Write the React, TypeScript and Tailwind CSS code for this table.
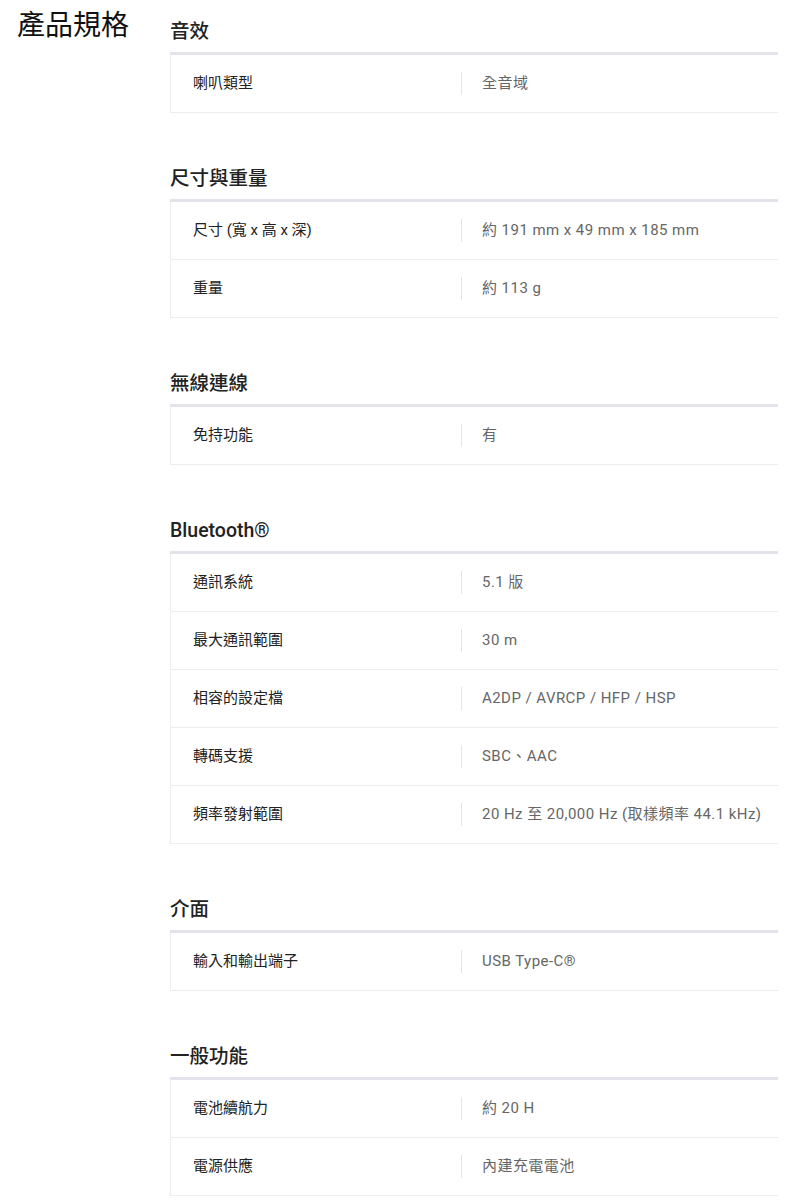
import React from "react";

type Row = [string, string];
type Section = { title: string; rows: Row[] };

const sections: Section[] = [
  { title: "音效", rows: [["喇叭類型", "全音域"]] },
  {
    title: "尺寸與重量",
    rows: [
      ["尺寸 (寬 x 高 x 深)", "約 191 mm x 49 mm x 185 mm"],
      ["重量", "約 113 g"],
    ],
  },
  { title: "無線連線", rows: [["免持功能", "有"]] },
  {
    title: "Bluetooth®",
    rows: [
      ["通訊系統", "5.1 版"],
      ["最大通訊範圍", "30 m"],
      ["相容的設定檔", "A2DP / AVRCP / HFP / HSP"],
      ["轉碼支援", "SBC、AAC"],
      ["頻率發射範圍", "20 Hz 至 20,000 Hz (取樣頻率 44.1 kHz)"],
    ],
  },
  { title: "介面", rows: [["輸入和輸出端子", "USB Type-C®"]] },
  {
    title: "一般功能",
    rows: [
      ["電池續航力", "約 20 H"],
      ["電源供應", "內建充電電池"],
    ],
  },
];

export default function App() {
  return (
    <div
      className="flex w-[800px] bg-white text-[#222]"
      style={{ fontFamily: 'Roboto, "Noto Sans CJK TC", sans-serif' }}
    >
      <div className="w-[170px] shrink-0 pl-[17px] pt-[8px]">
        <h1 className="text-[28px] leading-[36px] font-normal text-[#111]">產品規格</h1>
      </div>
      <div className="w-[608px] pt-[20px]">
        {sections.map((s) => (
          <section key={s.title} className="mb-[54px]">
            <h2 className="text-[19.5px] leading-[24px] font-medium text-[#222] mb-[8px]">
              {s.title}
            </h2>
            <div className="border-t-[3px] border-[#e2e3eb]">
              {s.rows.map(([k, v]) => (
                <div
                  key={k}
                  className="flex h-[58px] items-center border-l border-b border-[#ededed]"
                >
                  <div className="w-[290px] shrink-0 pl-[22px] text-[15px] text-[#222]">{k}</div>
                  <div className="h-[23px] w-px bg-[#e4e4e4]" />
                  <div className="pl-[20px] text-[15px] tracking-[0.45px] text-[#666]">{v}</div>
                </div>
              ))}
            </div>
          </section>
        ))}
      </div>
    </div>
  );
}
